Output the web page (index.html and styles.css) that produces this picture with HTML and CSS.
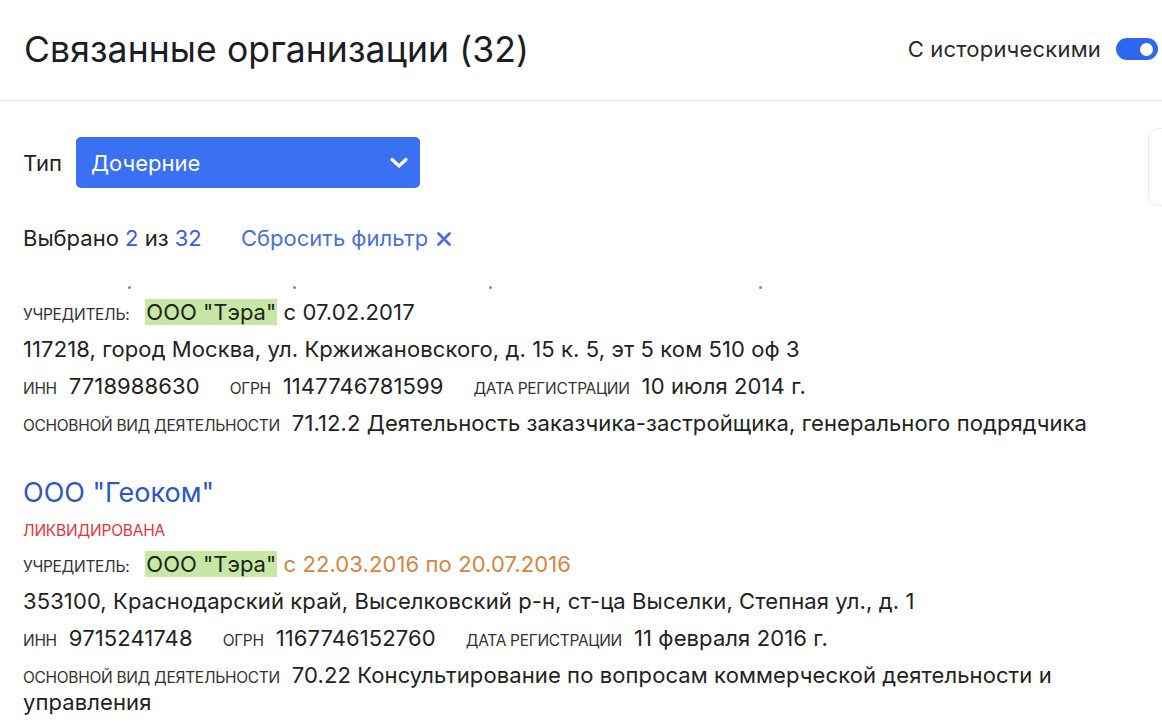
FILE: index.html
```html
<!DOCTYPE html>
<html lang="ru">
<head>
<meta charset="utf-8">
<title>Связанные организации</title>
<link rel="stylesheet" href="styles.css">
</head>
<body>
<div class="page">
  <header class="header">
    <h1 class="title">Связанные организации (32)</h1>
    <div class="hist">
      <span class="hist-label">С историческими</span>
      <span class="toggle"><span class="knob"></span></span>
    </div>
  </header>

  <div class="content">
    <div class="filter-row">
      <span class="filter-label">Тип</span>
      <div class="select">
        <span>Дочерние</span>
        <svg class="chev" width="20" height="14" viewBox="0 0 20 14"><path d="M3 3.5 L10 10 L17 3.5" fill="none" stroke="#fff" stroke-width="3.2" stroke-linecap="round" stroke-linejoin="round"/></svg>
      </div>
      <div class="side-card"></div>
    </div>

    <div class="selected">
      Выбрано <span class="num">2</span> из <span class="num">32</span>
      <span class="reset">Сбросить фильтр <svg class="x" width="16" height="16" viewBox="0 0 16 16"><path d="M2.5 2.5 L13.5 13.5 M13.5 2.5 L2.5 13.5" stroke="#4a6fde" stroke-width="2.8" stroke-linecap="round"/></svg></span>
    </div>

    <div class="dots"><span class="dot"></span><span class="dot"></span><span class="dot"></span><span class="dot"></span></div>

    <div class="org">
      <div class="row"><span class="lbl lbl-f">учредитель:</span><span class="hl">ООО "Тэра"</span> с 07.02.2017</div>
      <div class="row">117218, город Москва, ул. Кржижановского, д. 15 к. 5, эт 5 ком 510 оф 3</div>
      <div class="row"><span class="lbl">инн</span><span class="val">7718988630</span><span class="lbl">огрн</span><span class="val">1147746781599</span><span class="lbl">дата регистрации</span><span class="val">10 июля 2014 г.</span></div>
      <div class="row"><span class="lbl">основной вид деятельности</span>71.12.2 Деятельность заказчика-застройщика, генерального подрядчика</div>
    </div>

    <div class="org org2">
      <div class="org-name">ООО "Геоком"</div>
      <div class="status">ликвидирована</div>
      <div class="row row-f"><span class="lbl lbl-f">учредитель:</span><span class="hl">ООО "Тэра"</span><span class="period"> с 22.03.2016 по 20.07.2016</span></div>
      <div class="row">353100, Краснодарский край, Выселковский р-н, ст-ца Выселки, Степная ул., д. 1</div>
      <div class="row"><span class="lbl">инн</span><span class="val">9715241748</span><span class="lbl">огрн</span><span class="val">1167746152760</span><span class="lbl">дата регистрации</span><span class="val">11 февраля 2016 г.</span></div>
      <div class="row"><span class="lbl">основной вид деятельности</span>70.22 Консультирование по вопросам коммерческой деятельности и управления</div>
    </div>
  </div>
</div>
</body>
</html>
```

FILE: styles.css
```css
* { box-sizing: border-box; }
html, body { margin: 0; padding: 0; background: #fff; }
body {
  font-family: Inter, "Noto Sans", "DejaVu Sans", sans-serif;
  color: #222;
  width: 1162px;
  height: 725px;
  overflow: hidden;
}
.page { width: 1162px; }

.header {
  height: 101px;
  border-bottom: 1px solid #e8e8e8;
  display: flex;
  align-items: center;
  justify-content: space-between;
  padding: 0 4px 2px 24px;
}
.title {
  margin: 0;
  font-size: 35.5px;
  font-weight: 400;
  color: #1c1c24;
  letter-spacing: 0.1px;
}
.hist { display: flex; align-items: center; gap: 15px; }
.hist-label { font-size: 22px; color: #2a2a2a; letter-spacing: 0.2px; }
.toggle {
  width: 42px;
  height: 22px;
  border-radius: 11px;
  background: #2f66ee;
  display: flex;
  align-items: center;
  justify-content: flex-end;
  padding-right: 5px;
}
.knob { width: 13px; height: 13px; border-radius: 50%; background: #fff; }

.content { padding: 0 0 0 23px; width: 1130px; }

.filter-row {
  margin-top: 36px;
  display: flex;
  align-items: center;
  height: 51px;
  position: relative;
}
.filter-label { font-size: 22px; color: #222; width: 53px; }
.select {
  width: 344px;
  height: 51px;
  background: #3a70f2;
  border-radius: 5px;
  display: flex;
  align-items: center;
  justify-content: space-between;
  padding: 0 11px 0 15px;
  color: #fff;
  font-size: 22px;
}
.chev { margin-top: 1px; }
.side-card {
  position: absolute;
  left: 1125px;
  top: -9px;
  width: 60px;
  height: 78px;
  border: 1px solid #ececec;
  border-radius: 10px;
}

.selected {
  margin-top: 37px;
  line-height: 27px;
  font-size: 22px;
  color: #222;
}
.num { color: #3a5fd3; }
.reset { color: #4a6fde; margin-left: 33px; }
.x { vertical-align: -1px; margin-left: 2px; }

.dots { display: flex; align-items: center; height: 24px; margin-top: 23px; }
.dot { width: 3px; height: 3px; background: #8a8a8a; border-radius: 50%; }
.dot:nth-child(1) { margin-left: 105px; }
.dot:nth-child(2) { margin-left: 162px; }
.dot:nth-child(3) { margin-left: 193px; }
.dot:nth-child(4) { margin-left: 267px; }

.row {
  font-size: 22px;
  line-height: 27px;
  margin-top: 10px;
  color: #222;
  letter-spacing: 0.1px;
}
.org .row:first-child { margin-top: 0; }
.lbl {
  text-transform: uppercase;
  font-size: 15.5px;
  line-height: 1;
  color: #333;
  letter-spacing: -0.3px;
  margin-right: 12px;
}
.lbl-f { margin-right: 16px; }
.val { margin-right: 30px; }
.hl {
  background: #c6e8a4;
  padding: 0 1px;
  display: inline-block;
  line-height: 26px;
  vertical-align: top;
  letter-spacing: 0;
}
.period { color: #d4853f; }

.org2 { margin-top: 41px; }
.org-name {
  font-size: 27px;
  line-height: 30px;
  color: #2c57c4;
}
.status {
  margin-top: 13px;
  font-size: 15.5px;
  line-height: 20px;
  color: #e6343b;
  text-transform: uppercase;
  letter-spacing: -0.2px;
}
.org2 .row-f { margin-top: 10px; }
```
